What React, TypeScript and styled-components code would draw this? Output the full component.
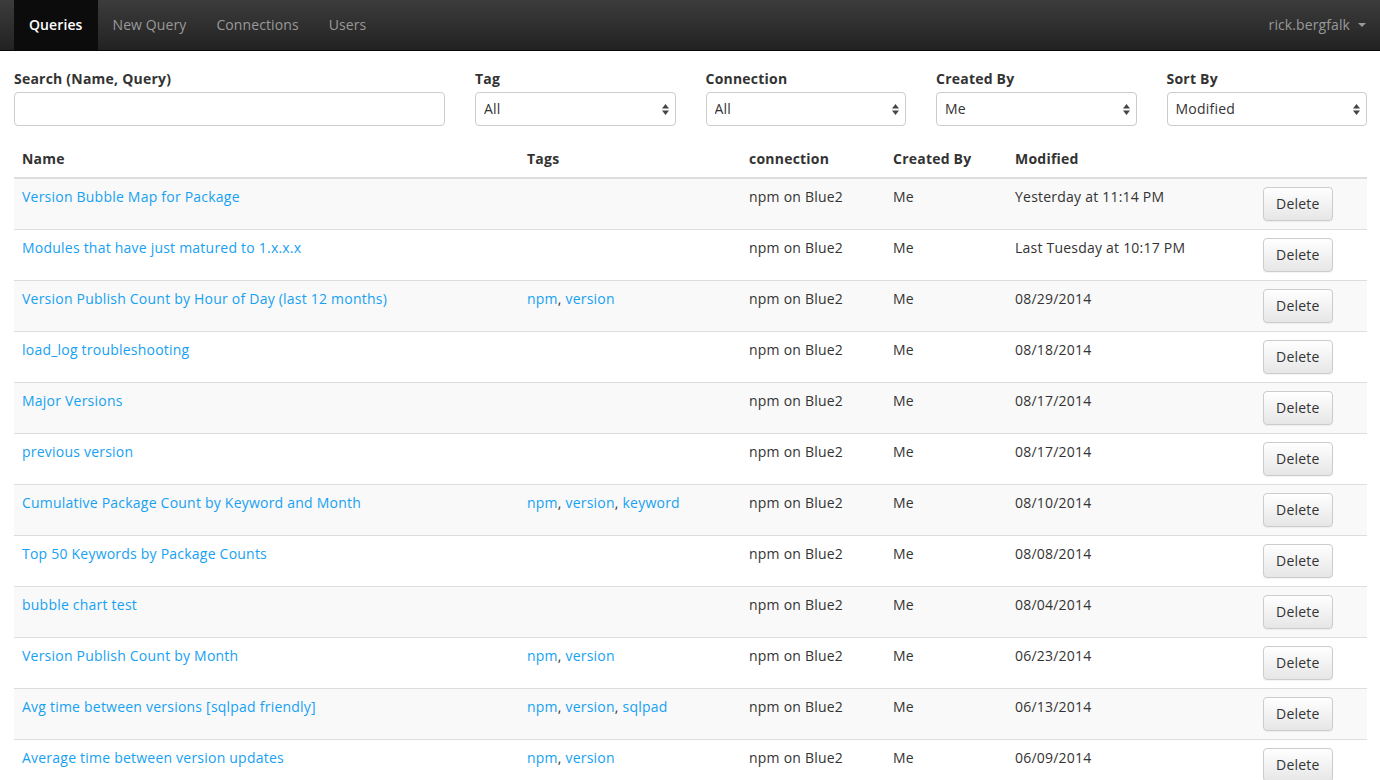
import React from 'react'
import styled, { createGlobalStyle } from 'styled-components'

const GlobalStyle = createGlobalStyle`
  body {
    margin: 0;
    background: #fff;
    font-family: "Open Sans", "Liberation Sans", sans-serif;
    font-size: 14px;
    letter-spacing: 0.22px;
    color: #333;
  }
  * { box-sizing: border-box; }
`

const Navbar = styled.nav`
  display: flex;
  align-items: stretch;
  height: 51px;
  padding: 0 14px;
  background: linear-gradient(to bottom, #3c3c3c 0%, #222 100%);
  border-bottom: 1px solid #080808;
`

const NavItem = styled.a<{ $active?: boolean }>`
  display: flex;
  align-items: center;
  padding: 0 15px 1px;
  font-size: 14px;
  letter-spacing: 0.1px;
  font-weight: ${(p) => (p.$active ? 600 : 400)};
  color: ${(p) => (p.$active ? '#fff' : '#999')};
  background: ${(p) => (p.$active ? '#0c0c0c' : 'transparent')};
  text-decoration: none;
  cursor: pointer;
`

const Spacer = styled.div`
  flex: 1;
`

const UserMenu = styled(NavItem)`
  gap: 8px;
  padding-right: 0;
`

const Caret = styled.span`
  width: 0;
  height: 0;
  border-left: 4px solid transparent;
  border-right: 4px solid transparent;
  border-top: 4px solid #999;
`

const Page = styled.div`
  padding: 0 13px 0 14px;
`

const Filters = styled.div`
  display: grid;
  grid-template-columns: 431px 1fr 1fr 1fr 1fr;
  column-gap: 30px;
  padding-top: 18px;
`

const Field = styled.div`
  display: flex;
  flex-direction: column;
`

const Label = styled.label`
  font-weight: 700;
  font-size: 14px;
  line-height: 20px;
  margin-bottom: 3px;
`

const TextInput = styled.input`
  height: 34px;
  width: 100%;
  border: 1px solid #ccc;
  border-radius: 4px;
  padding: 6px 8px;
  font: inherit;
`

const SelectWrap = styled.div`
  position: relative;
  height: 34px;
`

const SelectBox = styled.select`
  appearance: none;
  width: 100%;
  height: 34px;
  border: 1px solid #ccc;
  border-radius: 4px;
  background: #fff;
  padding: 0 8px 1px;
  font: inherit;
  letter-spacing: inherit;
  color: #333;
`

const Arrows = styled.svg`
  position: absolute;
  right: 7px;
  top: 12px;
  pointer-events: none;
`

const Select = ({ value }: { value: string }) => (
  <SelectWrap>
    <SelectBox defaultValue={value}>
      <option>{value}</option>
    </SelectBox>
    <Arrows width="7" height="11" viewBox="0 0 7 11">
      <path d="M3.5 0 L7 4.5 H0 Z" fill="#444" />
      <path d="M3.5 11 L7 6.5 H0 Z" fill="#444" />
    </Arrows>
  </SelectWrap>
)

const Table = styled.table`
  width: 100%;
  margin-top: 15px;
  border-collapse: collapse;
`

const Th = styled.th<{ $w?: number }>`
  text-align: left;
  font-weight: 700;
  padding: 8px;
  line-height: 20px;
  border-bottom: 2px solid #ddd;
  width: ${(p) => (p.$w ? `${p.$w}px` : 'auto')};
`

const Row = styled.tr`
  &:nth-child(odd) {
    background: #f9f9f9;
  }
`

const Td = styled.td`
  padding: 8px;
  line-height: 20px;
  vertical-align: top;
  border-top: 1px solid #ddd;
`

const Link = styled.a`
  color: #17a1f2;
  text-decoration: none;
`

const DeleteButton = styled.button`
  display: block;
  height: 34px;
  padding: 0 12px;
  font: inherit;
  letter-spacing: inherit;
  color: #333;
  border: 1px solid #ccc;
  border-radius: 4px;
  background: linear-gradient(to bottom, #fff 0%, #e6e6e6 100%);
  box-shadow: 0 1px 1px rgba(0, 0, 0, 0.05);
  margin-left: 7px;
`

type Query = {
  name: string
  tags: string[]
  modified: string
}

const queries: Query[] = [
  { name: 'Version Bubble Map for Package', tags: [], modified: 'Yesterday at 11:14 PM' },
  { name: 'Modules that have just matured to 1.x.x.x', tags: [], modified: 'Last Tuesday at 10:17 PM' },
  { name: 'Version Publish Count by Hour of Day (last 12 months)', tags: ['npm', 'version'], modified: '08/29/2014' },
  { name: 'load_log troubleshooting', tags: [], modified: '08/18/2014' },
  { name: 'Major Versions', tags: [], modified: '08/17/2014' },
  { name: 'previous version', tags: [], modified: '08/17/2014' },
  { name: 'Cumulative Package Count by Keyword and Month', tags: ['npm', 'version', 'keyword'], modified: '08/10/2014' },
  { name: 'Top 50 Keywords by Package Counts', tags: [], modified: '08/08/2014' },
  { name: 'bubble chart test', tags: [], modified: '08/04/2014' },
  { name: 'Version Publish Count by Month', tags: ['npm', 'version'], modified: '06/23/2014' },
  { name: 'Avg time between versions [sqlpad friendly]', tags: ['npm', 'version', 'sqlpad'], modified: '06/13/2014' },
  { name: 'Average time between version updates', tags: ['npm', 'version'], modified: '06/09/2014' },
]

export default function App() {
  return (
    <>
      <GlobalStyle />
      <Navbar>
        <NavItem $active>Queries</NavItem>
        <NavItem>New Query</NavItem>
        <NavItem>Connections</NavItem>
        <NavItem>Users</NavItem>
        <Spacer />
        <UserMenu>
          rick.bergfalk <Caret />
        </UserMenu>
      </Navbar>
      <Page>
        <Filters>
          <Field>
            <Label>Search (Name, Query)</Label>
            <TextInput type="text" />
          </Field>
          <Field>
            <Label>Tag</Label>
            <Select value="All" />
          </Field>
          <Field>
            <Label>Connection</Label>
            <Select value="All" />
          </Field>
          <Field>
            <Label>Created By</Label>
            <Select value="Me" />
          </Field>
          <Field>
            <Label>Sort By</Label>
            <Select value="Modified" />
          </Field>
        </Filters>
        <Table>
          <thead>
            <tr>
              <Th $w={505}>Name</Th>
              <Th $w={222}>Tags</Th>
              <Th $w={144}>connection</Th>
              <Th $w={122}>Created By</Th>
              <Th $w={241}>Modified</Th>
              <Th />
            </tr>
          </thead>
          <tbody>
            {queries.map((q) => (
              <Row key={q.name}>
                <Td>
                  <Link>{q.name}</Link>
                </Td>
                <Td>
                  {q.tags.map((t, i) => (
                    <React.Fragment key={t}>
                      {i > 0 && ', '}
                      <Link>{t}</Link>
                    </React.Fragment>
                  ))}
                </Td>
                <Td>npm on Blue2</Td>
                <Td>Me</Td>
                <Td>{q.modified}</Td>
                <Td>
                  <DeleteButton>Delete</DeleteButton>
                </Td>
              </Row>
            ))}
          </tbody>
        </Table>
      </Page>
    </>
  )
}
